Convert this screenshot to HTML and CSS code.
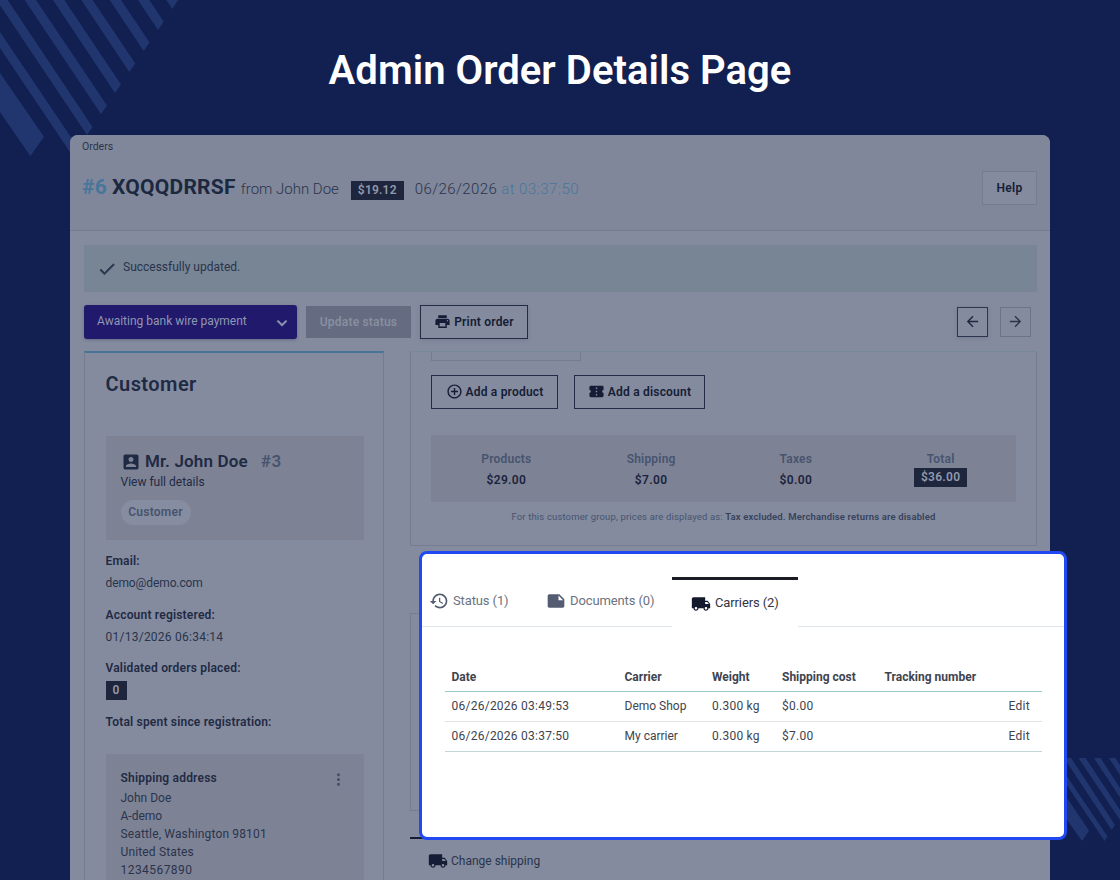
FILE: index.html
```html
<!DOCTYPE html>
<html>
	<head>
		<meta charset="UTF-8">
		<title>Admin Order Details Page</title>
		<link rel="stylesheet" href="styles.css">
	</head>
	<body>
		<!--icons-->
		<svg class="sprite">
			<symbol id="i-check" viewBox="0 0 24 24"><path d="M9 16.17L4.83 12l-1.42 1.41L9 19 21 7l-1.41-1.41z"/></symbol>
			<symbol id="i-more" viewBox="0 0 24 24"><path d="M16.59 8.59L12 13.17 7.41 8.59 6 10l6 6 6-6z"/></symbol>
			<symbol id="i-print" viewBox="0 0 24 24"><path d="M19 8H5c-1.66 0-3 1.34-3 3v6h4v4h12v-4h4v-6c0-1.66-1.34-3-3-3zm-3 11H8v-5h8v5zm3-7c-.55 0-1-.45-1-1s.45-1 1-1 1 .45 1 1-.45 1-1 1zm-1-9H6v4h12V3z"/></symbol>
			<symbol id="i-back" viewBox="0 0 24 24"><path d="M20 11H7.83l5.59-5.59L12 4l-8 8 8 8 1.41-1.41L7.83 13H20v-2z"/></symbol>
			<symbol id="i-forward" viewBox="0 0 24 24"><path d="M12 4l-1.41 1.41L16.17 11H4v2h12.17l-5.58 5.59L12 20l8-8z"/></symbol>
			<symbol id="i-account" viewBox="0 0 24 24"><path d="M3 5v14c0 1.1.89 2 2 2h14c1.1 0 2-.9 2-2V5c0-1.1-.9-2-2-2H5c-1.11 0-2 .9-2 2zm12 4c0 1.66-1.34 3-3 3s-3-1.34-3-3 1.34-3 3-3 3 1.34 3 3zm-9 8c0-2 4-3.1 6-3.1s6 1.1 6 3.1v1H6v-1z"/></symbol>
			<symbol id="i-add" viewBox="0 0 24 24"><path d="M13 7h-2v4H7v2h4v4h2v-4h4v-2h-4V7zm-1-5C6.48 2 2 6.48 2 12s4.48 10 10 10 10-4.48 10-10S17.52 2 12 2zm0 18c-4.41 0-8-3.59-8-8s3.59-8 8-8 8 3.59 8 8-3.59 8-8 8z"/></symbol>
			<symbol id="i-ticket" viewBox="0 0 24 24"><path d="M22 10V6c0-1.11-.9-2-2-2H4c-1.1 0-1.99.89-1.99 2v4c1.1 0 1.99.9 1.99 2s-.89 2-2 2v4c0 1.1.9 2 2 2h16c1.1 0 2-.9 2-2v-4c-1.1 0-2-.9-2-2s.9-2 2-2zm-9 7.5h-2v-2h2v2zm0-4.5h-2v-2h2v2zm0-4.5h-2v-2h2v2z"/></symbol>
			<symbol id="i-dots" viewBox="0 0 24 24"><path d="M12 8c1.1 0 2-.9 2-2s-.9-2-2-2-2 .9-2 2 .9 2 2 2zm0 2c-1.1 0-2 .9-2 2s.9 2 2 2 2-.9 2-2-.9-2-2-2zm0 6c-1.1 0-2 .9-2 2s.9 2 2 2 2-.9 2-2-.9-2-2-2z"/></symbol>
			<symbol id="i-history" viewBox="0 0 24 24"><path d="M13 3c-4.97 0-9 4.03-9 9H1l3.89 3.89.07.14L9 12H6c0-3.87 3.13-7 7-7s7 3.13 7 7-3.13 7-7 7c-1.93 0-3.68-.79-4.94-2.06l-1.42 1.42C8.27 19.99 10.51 21 13 21c4.97 0 9-4.03 9-9s-4.03-9-9-9zm-1 5v5l4.28 2.54.72-1.21-3.5-2.08V8H12z"/></symbol>
			<symbol id="i-note" viewBox="0 0 24 24"><path d="M22 10l-6-6H4c-1.1 0-2 .9-2 2v12.01c0 1.1.9 1.99 2 1.99l16-.01c1.1 0 2-.89 2-2v-8zm-7-4.5l5.5 5.5H15V5.5z"/></symbol>
			<symbol id="i-truck" viewBox="0 0 24 24"><path d="M20 8h-3V4H3c-1.1 0-2 .9-2 2v11h2c0 1.66 1.34 3 3 3s3-1.34 3-3h6c0 1.66 1.34 3 3 3s3-1.34 3-3h2v-5l-3-4zM6 18.5c-.83 0-1.5-.67-1.5-1.5s.67-1.5 1.5-1.5 1.5.67 1.5 1.5-.67 1.5-1.5 1.5zm13.5-9l1.96 2.5H17V9.5h2.5zm-1.5 9c-.83 0-1.5-.67-1.5-1.5s.67-1.5 1.5-1.5 1.5.67 1.5 1.5-.67 1.5-1.5 1.5z"/></symbol>
		</svg>

		<div id="stage">
			<!--stripes-->
			<svg class="stripes" width="1120" height="880" viewBox="0 0 1120 880">
				<path d="M0 73L44 136.7 30.3 156 0 112z"/>
				<path d="M0 32L81 152 72.6 156 0 48z"/>
				<path d="M-3.6 0H7.7L92.5 127 87 135z"/>
				<path d="M24.7 0H36L107 105.5 101 114z"/>
				<path d="M53 0H64.3L121 84.5 115 93z"/>
				<path d="M81.3 0H92.6L135.3 63.5 129.3 72z"/>
				<path d="M109.7 0H121L149.6 42.5 143.7 51z"/>
				<path d="M138 0H149.3L163.7 21.5 158 30z"/>
				<path d="M166.3 0H178L172.3 9z"/>
				<path d="M1060 787.5L1089 830.7 1082 841 1060 810z"/>
				<path d="M1060 766L1107.5 836.5 1104.7 841 1060 775z"/>
				<path d="M1064 758H1071L1115 825 1111.7 830z"/>
				<path d="M1078.5 758H1085.5L1120 810V820z"/>
				<path d="M1094 758H1100.5L1120 788V797.5z"/>
				<path d="M1109 758H1115.5L1120 765V775z"/>
			</svg>

			<h1>Admin Order Details Page</h1>

			<!--order page-->
			<div id="page">
				<div class="page-head">
					<div>
						<div class="crumb">Orders</div>
						<div class="order-title">
							<span class="order-id">#6</span>
							<span class="order-ref">XQQQDRRSF</span>
							<span class="order-from">from John Doe</span>
							<span class="tag order-total">$19.12</span>
							<span class="order-date">06/26/2026</span>
							<span class="order-time">at 03:37:50</span>
						</div>
					</div>
					<div class="help">Help</div>
				</div>

				<div class="page-body">
					<div class="alert"><svg><use href="#i-check"/></svg><span>Successfully updated.</span></div>

					<div class="actions">
						<div class="select"><span>Awaiting bank wire payment</span><svg><use href="#i-more"/></svg></div>
						<div class="btn update">Update status</div>
						<div class="btn print"><svg><use href="#i-print"/></svg>Print order</div>
						<div class="nav prev"><svg><use href="#i-back"/></svg></div>
						<div class="nav next"><svg><use href="#i-forward"/></svg></div>
					</div>

					<div class="cols">
						<div class="customer">
							<h2>Customer</h2>
							<div class="box person">
								<div class="name"><svg><use href="#i-account"/></svg><span>Mr. John Doe</span><span class="num">#3</span></div>
								<div class="view">View full details</div>
								<div class="pill">Customer</div>
							</div>
							<div class="facts">
								<b>Email:</b>
								<p class="email">demo@demo.com</p>
								<b>Account registered:</b>
								<p class="digits">01/13/2026 06:34:14</p>
								<b>Validated orders placed:</b>
								<p class="placed"><span class="tag">0</span></p>
								<b>Total spent since registration:</b>
							</div>
							<div class="box address">
								<div class="address-head"><b>Shipping address</b><svg><use href="#i-dots"/></svg></div>
								<p>John Doe</p>
								<p>A-demo</p>
								<p class="city">Seattle, Washington 98101</p>
								<p class="city">United States</p>
								<p class="phone">1234567890</p>
							</div>
						</div>

						<div class="main">
							<div class="card products">
								<div class="field"></div>
								<div class="btns">
									<div class="btn add-product"><svg><use href="#i-add"/></svg>Add a product</div>
									<div class="btn add-discount"><svg><use href="#i-ticket"/></svg>Add a discount</div>
								</div>
								<div class="totals">
									<div><b>Products</b><strong>$29.00</strong></div>
									<div><b>Shipping</b><strong>$7.00</strong></div>
									<div><b>Taxes</b><strong>$0.00</strong></div>
									<div><b>Total</b><span class="tag sum">$36.00</span></div>
								</div>
								<div class="note">For this customer group, prices are displayed as: <b>Tax excluded. Merchandise returns are disabled</b></div>
							</div>
							<div class="card blank"></div>
							<div class="shipping">
								<svg><use href="#i-truck"/></svg><span>Change shipping</span>
							</div>
						</div>
					</div>
				</div>
			</div>

			<!--carriers popup-->
			<div id="popup">
				<div class="tabs">
					<div class="tab status"><svg><use href="#i-history"/></svg>Status (1)</div>
					<div class="tab docs"><svg><use href="#i-note"/></svg>Documents (0)</div>
					<div class="tab active"><svg><use href="#i-truck"/></svg>Carriers (2)</div>
					<div class="rest"></div>
				</div>
				<div class="table">
					<div class="row head">
						<span>Date</span><span>Carrier</span><span>Weight</span><span>Shipping cost</span><span>Tracking number</span><span></span>
					</div>
					<div class="row">
						<span class="digits">06/26/2026 03:49:53</span><span>Demo Shop</span><span class="digits">0.300 kg</span><span class="digits">$0.00</span><span></span><span class="digits">Edit</span>
					</div>
					<div class="row last">
						<span class="digits">06/26/2026 03:37:50</span><span>My carrier</span><span class="digits">0.300 kg</span><span class="digits">$7.00</span><span></span><span class="digits">Edit</span>
					</div>
				</div>
			</div>
		</div>
	</body>
</html>
```
FILE: styles.css
```css
* {
	padding: 0px;
	margin: 0px;
	box-sizing: border-box;
}

body {
	font-family: Roboto, "Liberation Sans", sans-serif;
	font-size: 12px;
	line-height: 18px;
	color: #29344c;
}

svg {
	display: block;
	fill: currentColor;
	flex: none;
}

b, strong {
	font-weight: 600;
	letter-spacing: 0.2px;
}

.digits {
	letter-spacing: 0.25px;
}

.sprite {
	position: absolute;
	width: 0;
	height: 0;
}

#stage {
	position: relative;
	width: 1120px;
	height: 880px;
	overflow: hidden;
	background-color: #112050;
}

.stripes {
	position: absolute;
	top: 0;
	left: 0;
	fill: #21366f;
}

h1 {
	position: relative;
	height: 135px;
	padding-top: 47px;
	line-height: 48px;
	font-size: 40px;
	font-weight: 600;
	letter-spacing: 0.05px;
	text-align: center;
	color: #fff;
}

/*order page*/
#page {
	position: relative;
	width: 980px;
	height: 745px;
	margin: 0 auto;
	border-radius: 8px 8px 0 0;
	overflow: hidden;
	background-color: #848b9e;
}

.page-head {
	display: flex;
	justify-content: space-between;
	height: 96px;
	padding: 4px 13px 0 12px;
	background-color: #80879a;
	border-bottom: 1px solid #747b90;
}

.crumb {
	font-size: 10.5px;
	line-height: 16px;
}

.order-title {
	display: flex;
	align-items: baseline;
	margin-top: 17px;
	line-height: 30px;
	white-space: nowrap;
}

.order-id, .order-ref {
	font-size: 21px;
	font-weight: 700;
	letter-spacing: 0.25px;
}

.order-id {
	color: #48769a;
	margin-right: 5px;
}

.order-ref {
	color: #1c2740;
	margin-right: 5px;
}

.order-from, .order-date, .order-time {
	font-size: 15px;
	font-weight: 300;
}

.order-date {
	margin: 0 4px 0 11px;
	letter-spacing: 0.4px;
}

.order-time {
	color: #48769a;
	letter-spacing: 0.45px;
}

.tag {
	display: inline-block;
	height: 19px;
	line-height: 19px;
	padding: 0 7px;
	background-color: #1e263e;
	color: #9299aa;
	font-size: 12px;
	font-weight: 600;
	letter-spacing: 0.3px;
}

.order-total {
	margin-left: 12px;
	letter-spacing: 0.2px;
}

.help {
	width: 55px;
	height: 34px;
	margin-top: 32px;
	line-height: 32px;
	text-align: center;
	font-weight: 600;
	letter-spacing: 0.3px;
	color: #141d35;
	background-color: #848b9e;
	border: 1px solid #757c90;
}

.page-body {
	padding: 14px 13px 0 14px;
}

.alert {
	display: flex;
	align-items: center;
	height: 47px;
	padding: 0 0 3px 13px;
	background-color: #788595;
}

.alert svg {
	width: 20px;
	height: 20px;
	margin: 3px 6px 0 0;
	stroke: currentColor;
	stroke-width: 0.6px;
}

.actions {
	display: flex;
	align-items: center;
	height: 34px;
	margin-top: 13px;
}

.select {
	display: flex;
	align-items: center;
	justify-content: space-between;
	width: 213px;
	height: 34px;
	padding: 0 5px 2px 13px;
	border-radius: 3px;
	background-color: #20196c;
	color: #9097b2;
	box-shadow: 0 1px 3px rgba(30, 38, 80, .3);
}

.select svg {
	width: 20px;
	height: 20px;
	margin-top: 3px;
	stroke: currentColor;
	stroke-width: 0.6px;
}

.btn {
	display: flex;
	align-items: center;
	justify-content: center;
	height: 34px;
	padding-bottom: 1px;
	border: 1px solid #232c46;
	font-weight: 600;
	letter-spacing: 0.2px;
	color: #141d35;
}

.btn svg {
	width: 17px;
	height: 17px;
	margin-right: 3px;
}

.update {
	width: 105px;
	height: 32px;
	margin: 0 9px;
	border: 0;
	background-color: #656b80;
	color: #888fa1;
}

.print {
	width: 108px;
	box-shadow: 0 1px 4px rgba(30, 38, 80, .15);
}

.nav {
	display: flex;
	align-items: center;
	justify-content: center;
	width: 31px;
	height: 30px;
	padding-bottom: 1px;
	border: 1px solid #2c354e;
	color: #1c2740;
}

.nav svg {
	width: 17px;
	height: 17px;
}

.prev {
	margin-left: auto;
	box-shadow: 0 1px 4px rgba(30, 38, 80, .15);
}

.next {
	margin: 0 6px 0 12px;
	border-color: #6c7388;
	color: #2c354e;
}

.cols {
	display: flex;
	justify-content: space-between;
	margin-top: 12px;
}

/*customer column*/
.customer {
	width: 300px;
	height: 540px;
	padding: 17px 20px 0 20.5px;
	border: 1px solid #757c90;
	border-top: 2px solid #467597;
}

.customer h2 {
	line-height: 28px;
	font-size: 20px;
	font-weight: 600;
	letter-spacing: 0.45px;
	color: #1f2a44;
}

.box {
	width: 258px;
	background-color: #7e8295;
}

.person {
	height: 104px;
	margin-top: 38px;
	padding: 14px 15px 0;
}

.name {
	display: flex;
	align-items: center;
	line-height: 22px;
	font-size: 17px;
	font-weight: 600;
	letter-spacing: 0.15px;
	color: #1f2a44;
}

.name svg {
	width: 20px;
	height: 20px;
	margin: 2px 4.5px 0 0;
}

.num {
	margin-left: 13px;
	letter-spacing: 0.5px;
	color: #46546f;
}

.view {
	margin-top: 1px;
	color: #1f2a44;
}

.pill {
	width: 70px;
	height: 25px;
	margin-top: 9px;
	line-height: 25px;
	border-radius: 13px;
	text-align: center;
	font-weight: 600;
	letter-spacing: 0.25px;
	color: #46546f;
	background-color: #868da0;
}

.facts {
	margin-top: 12px;
}

.facts b {
	display: block;
	color: #1f2a44;
}

.facts p {
	height: 18px;
	margin: 4px 0 13px;
}

.facts .email {
	margin-bottom: 14px;
	letter-spacing: -0.1px;
}

.facts .placed {
	height: 19px;
	margin-bottom: 13px;
}

.address {
	height: 150px;
	margin-top: 23px;
	padding: 15px 16px 0 15px;
}

.address-head {
	display: flex;
	justify-content: space-between;
	margin-bottom: 2px;
	height: 18px;
	color: #1f2a44;
}

.address-head svg {
	width: 19px;
	height: 19px;
	margin-top: 1px;
	color: #46506a;
}

.city {
	letter-spacing: 0.15px;
}

.phone {
	letter-spacing: 0.45px;
}

/*products column*/
.main {
	width: 627px;
}

.card {
	border: 1px solid #767d91;
}

.products {
	height: 195px;
	padding: 0 20px;
	border-top-color: #76899c;
}

.field {
	width: 150px;
	height: 9px;
	border: 1px solid #757c90;
	border-top: 0;
}

.btns {
	display: flex;
	gap: 16px;
	margin-top: 14px;
}

.add-product {
	width: 127px;
}

.add-discount {
	width: 131px;
}

.totals {
	display: grid;
	grid-template-columns: repeat(4, 1fr);
	height: 67px;
	margin-top: 26px;
	padding: 15px 3px 0;
	text-align: center;
	background-color: #7e8295;
}

.totals b {
	display: block;
	color: #46546f;
}

.totals strong {
	display: block;
	margin-top: 3px;
	letter-spacing: 0.35px;
	color: #1a243c;
}

.sum {
	display: block;
	width: 53px;
	margin: 0 auto;
	padding: 0;
}

.note {
	margin-top: 6px;
	font-size: 9.5px;
	letter-spacing: 0.15px;
	text-align: center;
	color: #46546f;
}

.note b {
	letter-spacing: 0.15px;
	color: #36425c;
}

.blank {
	height: 198px;
	margin-top: 67px;
}

.shipping {
	display: flex;
	align-items: center;
	height: 46px;
	margin-top: 26px;
	padding-left: 18px;
	border-top: 2px solid #141d35;
}

.shipping svg {
	width: 20px;
	height: 20px;
	margin-right: 3px;
	color: #141d35;
}

/*popup*/
#popup {
	position: absolute;
	left: 419px;
	top: 551px;
	width: 648px;
	height: 289px;
	padding-top: 23px;
	border: 3px solid #2149f2;
	border-radius: 8px;
	background-color: #fff;
	color: #40444f;
}

.tabs {
	display: flex;
	height: 50px;
}

.tab, .rest {
	display: flex;
	align-items: center;
	padding-bottom: 2px;
	border-bottom: 1px solid #dfe4e8;
	color: #6c7280;
	font-size: 13px;
	letter-spacing: -0.12px;
}

.tab svg {
	width: 20px;
	height: 20px;
	margin: 1px 4px 0 0;
	color: #535c70;
}

.status {
	width: 124px;
	padding-left: 7px;
}

.docs {
	width: 126px;
}

.tab.active {
	width: 126px;
	padding: 0 0 1px 19px;
	border-top: 3px solid #1b1b24;
	border-bottom: 0;
	color: #33353f;
}

.tab.active svg {
	margin-top: 2px;
	color: #14192b;
}

.rest {
	flex: 1;
}

.table {
	width: 597px;
	margin: 35px 0 0 23px;
}

.row {
	display: grid;
	grid-template-columns: 173px 87.5px 70px 102.5px 124px 1fr;
	height: 30px;
	padding: 5px 0 0 6.5px;
	border-bottom: 1px solid #dfe3e6;
}

.row.head {
	padding-top: 6px;
	border-color: #98cbcc;
	font-weight: 700;
}

.row.last {
	border-color: #c2d6d6;
}
```
